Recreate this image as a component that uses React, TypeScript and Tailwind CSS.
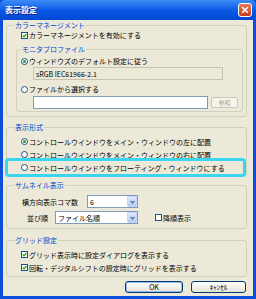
import React from "react";

function Check({ checked }: { checked?: boolean }) {
  return (
    <span className="w-[7px] h-[7px] border border-[#1c5180] bg-white flex items-center justify-center shrink-0">
      {checked && (
        <svg width="5" height="5" viewBox="0 0 5 5">
          <path d="M0.6 2.4 L2 3.8 L4.4 1" stroke="#21a121" strokeWidth="1.3" fill="none" />
        </svg>
      )}
    </span>
  );
}

function Radio({ checked }: { checked?: boolean }) {
  return (
    <span className="w-[7px] h-[7px] rounded-full border border-[#1c5180] bg-white flex items-center justify-center shrink-0">
      {checked && <span className="w-[3px] h-[3px] rounded-full bg-[#21a121]" />}
    </span>
  );
}

function Combo({ value, width }: { value: string; width: string }) {
  return (
    <div className={`h-[13px] ${width} border border-[#7f9db9] bg-white flex items-center`}>
      <span className="flex-1 pl-[2px] text-[7px] leading-[8px] whitespace-nowrap">{value}</span>
      <span className="w-[10px] h-[11px] bg-linear-to-b from-[#e3ebfd] to-[#b7cbf7] border border-[#c3d3fb] rounded-[1px] flex items-center justify-center">
        <svg width="5" height="4" viewBox="0 0 5 4">
          <path d="M0.6 0.8 L2.5 2.8 L4.4 0.8" stroke="#4d6185" strokeWidth="1.2" fill="none" />
        </svg>
      </span>
    </div>
  );
}

const legendCls = "px-[1px] text-[7px] leading-[8px] text-[#0046d5] whitespace-nowrap";
const rowText = "text-[7px] leading-[8px] whitespace-nowrap";

export default function App() {
  return (
    <div className="w-[256px] h-[299px] flex flex-col bg-[#0b4edc] font-['Noto_Sans_CJK_JP',sans-serif] text-black overflow-hidden">
      {/* Title bar */}
      <div className="h-[20px] shrink-0 flex items-center justify-between rounded-t-[5px] bg-linear-to-b from-[#3d8cf5] via-[#0a5ae6] to-[#0448d3]">
        <span className="pl-[5px] text-[8px] leading-[10px] font-bold text-white [text-shadow:1px_1px_#0a1f8f]">表示設定</span>
        <span className="mr-[4px] w-[14px] h-[14px] rounded-[3px] border border-white bg-linear-to-b from-[#e8795a] to-[#c7381a] flex items-center justify-center">
          <svg width="8" height="8" viewBox="0 0 8 8">
            <path d="M1.2 1.2 L6.8 6.8 M6.8 1.2 L1.2 6.8" stroke="white" strokeWidth="1.6" />
          </svg>
        </span>
      </div>

      {/* Body */}
      <div className="flex-1 mx-[3px] mb-[3px] bg-[#ece9d8] relative flex flex-col pt-[1px] pl-[3px] pr-[6px]">
        {/* Group 1 */}
        <fieldset className="min-w-0 border border-[#d0d0bf] rounded-[3px] pb-[4px]">
          <legend className={`ml-[7px] ${legendCls}`}>カラーマネージメント</legend>
          <div className="h-[12px] flex items-center gap-[1px] ml-[14px]">
            <Check checked />
            <span className={rowText}>カラーマネージメントを有効にする</span>
          </div>
          <fieldset className="min-w-0 mt-[4px] ml-[9px] mr-[3px] border border-[#d0d0bf] rounded-[3px] pb-[2px]">
            <legend className={`ml-[4px] ${legendCls}`}>モニタプロファイル</legend>
            <div className="mt-[2px] h-[12px] flex items-center gap-[1px] ml-[4px]">
              <Radio checked />
              <span className={rowText}>ウィンドウズのデフォルト設定に従う</span>
            </div>
            <div className="ml-[16px] w-[190px] h-[13px] border border-[#c5c2b2] flex items-center px-[2px]">
              <span className={rowText}>sRGB IEC61966-2.1</span>
            </div>
            <div className="mt-[3px] h-[12px] flex items-center gap-[1px] ml-[4px]">
              <Radio />
              <span className={rowText}>ファイルから選択する</span>
            </div>
            <div className="mt-[1px] h-[13px] flex items-center ml-[16px]">
              <div className="w-[175px] h-[13px] border border-[#7f9db9] bg-white" />
              <div className="ml-[3px] w-[27px] h-[11px] rounded-[2px] border border-[#c9c7ba] bg-[#f5f4ea] flex items-center justify-center">
                <span className="text-[6px] leading-[7px] text-[#aca899]">参照</span>
              </div>
            </div>
          </fieldset>
        </fieldset>

        {/* Group 2 */}
        <fieldset className="min-w-0 mt-[6px] border border-[#d0d0bf] rounded-[3px] pb-[2px]">
          <legend className={`ml-[7px] ${legendCls}`}>表示形式</legend>
          <div className="mt-[4px] h-[13px] flex items-center gap-[1px] ml-[14px]">
            <Radio checked />
            <span className={rowText}>コントロールウインドウをメイン・ウィンドウの左に配置</span>
          </div>
          <div className="h-[13px] flex items-center gap-[1px] ml-[14px]">
            <Radio />
            <span className={rowText}>コントロールウインドウをメイン・ウィンドウの右に配置</span>
          </div>
          <div className="h-[13px] flex items-center gap-[1px] ml-[14px]">
            <Radio />
            <span className={rowText}>コントロールウインドウをフローティング・ウィンドウにする</span>
          </div>
        </fieldset>

        {/* Group 3 */}
        <fieldset className="min-w-0 mt-[4px] border border-[#d0d0bf] rounded-[3px] pb-[4px]">
          <legend className={`ml-[7px] ${legendCls}`}>サムネイル表示</legend>
          <div className="mt-[6px] h-[13px] flex items-center ml-[15px]">
            <span className={`w-[65px] ${rowText}`}>横方向表示コマ数</span>
            <Combo value="6" width="w-[51px]" />
          </div>
          <div className="mt-[3px] h-[13px] flex items-center ml-[20px]">
            <span className={`w-[28px] ${rowText}`}>並び順</span>
            <Combo value="ファイル名順" width="w-[83px]" />
            <div className="ml-[17px] flex items-center gap-[1px]">
              <Check />
              <span className={rowText}>降順表示</span>
            </div>
          </div>
        </fieldset>

        {/* Group 4 */}
        <fieldset className="min-w-0 mt-[7px] border border-[#d0d0bf] rounded-[3px] pb-[2px]">
          <legend className={`ml-[7px] ${legendCls}`}>グリッド設定</legend>
          <div className="mt-[4px] h-[13px] flex items-center gap-[1px] ml-[14px]">
            <Check checked />
            <span className={rowText}>グリッド表示時に設定ダイアログを表示する</span>
          </div>
          <div className="h-[13px] flex items-center gap-[1px] ml-[14px]">
            <Check checked />
            <span className={rowText}>回転・デジタルシフトの設定時にグリッドを表示する</span>
          </div>
        </fieldset>

        {/* Buttons */}
        <div className="mt-[4px] flex justify-end gap-[8px] mr-[1px]">
          <div className="w-[58px] h-[12px] rounded-[3px] border border-[#003c74] bg-linear-to-b from-white to-[#e6e3d6] shadow-[inset_0_0_0_1px_#98b8ee] flex items-center justify-center">
            <span className="text-[7px] leading-[8px]">OK</span>
          </div>
          <div className="w-[55px] h-[12px] rounded-[3px] border border-[#003c74] bg-linear-to-b from-white to-[#e6e3d6] flex items-center justify-center">
            <span className="text-[7px] leading-[8px]">ｷｬﾝｾﾙ</span>
          </div>
        </div>

        {/* Cyan highlight overlay */}
        <div className="absolute left-[2px] top-[138px] w-[241px] h-[19px] border-[3px] border-[#3ad5f1] rounded-[4px] pointer-events-none" />
      </div>
    </div>
  );
}
